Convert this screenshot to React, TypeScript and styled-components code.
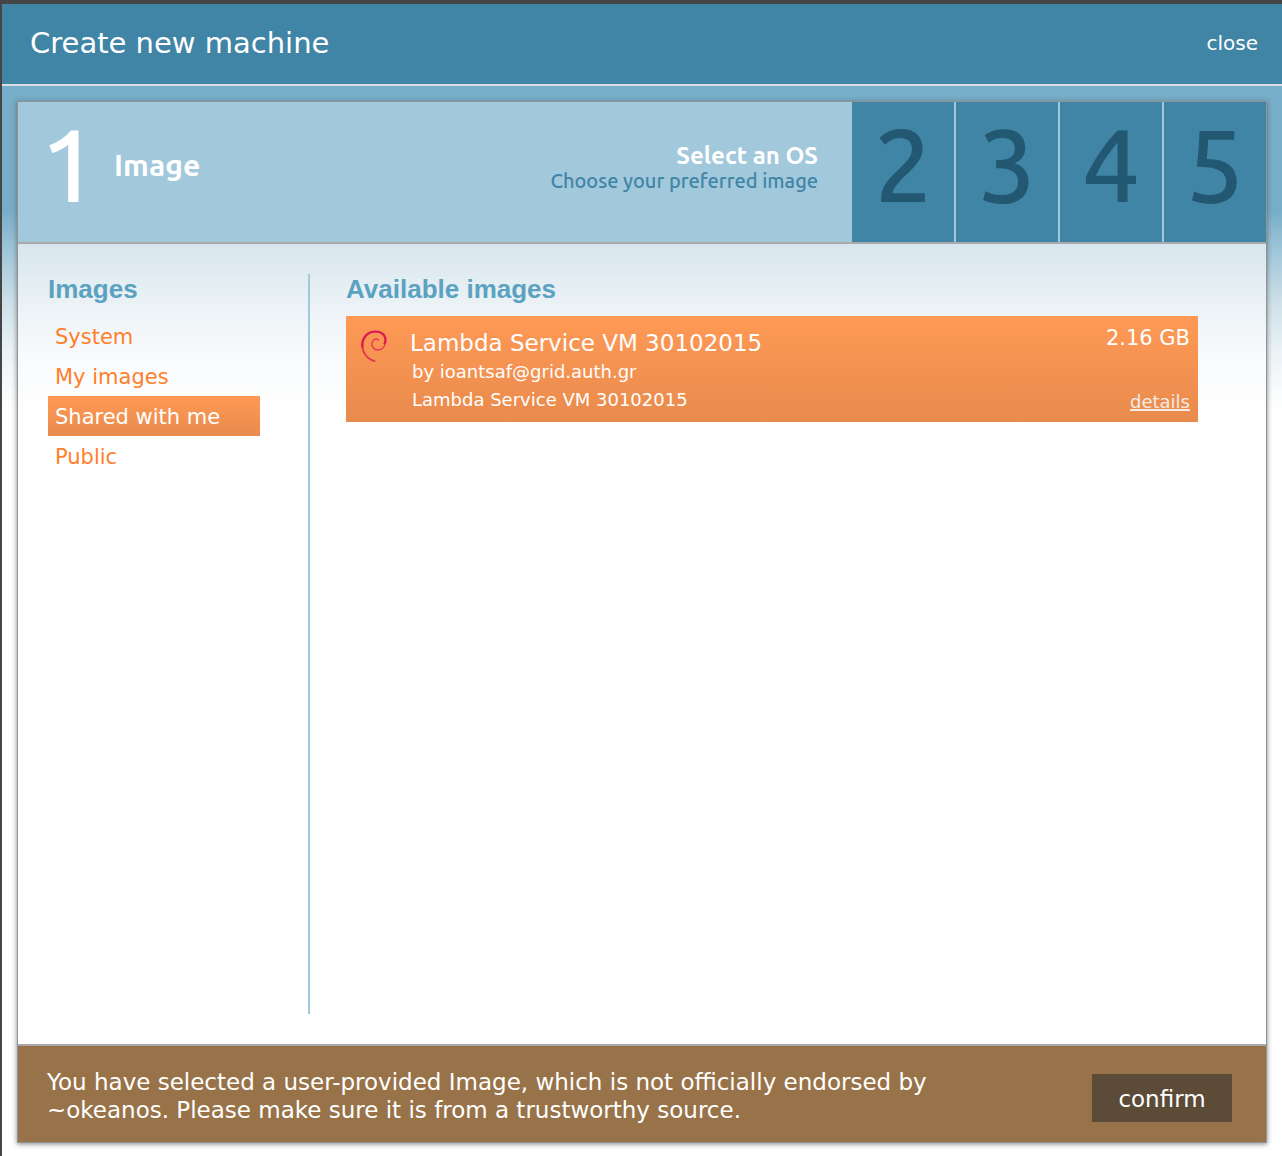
import React, { useState } from "react";
import styled, { createGlobalStyle } from "styled-components";

const sans = '"DejaVu Sans", Verdana, sans-serif';
const display = 'Ubuntu, "Noto Sans", sans-serif';
const heading = '"Liberation Sans", Arial, sans-serif';

const GlobalStyle = createGlobalStyle`
  * { box-sizing: border-box; }
  body { margin: 0; background: #fff; font-family: ${sans}; }
  h1, h2, h3, p, ul { margin: 0; padding: 0; }
  ul { list-style: none; }
  button { border: 0; margin: 0; padding: 0; font: inherit; cursor: pointer; }
`;

const Page = styled.div`
  display: flex;
  flex-direction: column;
  min-height: 100vh;
  border-top: 4px solid #464546;
  border-left: 2px solid #464546;
`;

const Header = styled.header`
  display: flex;
  align-items: center;
  justify-content: space-between;
  height: 82px;
  padding: 0 24px 2px 28px;
  color: #fff;
  background: #4085a6;
  border-bottom: 2px solid #dadde3;
`;

const Title = styled.h1`
  font-size: 29px;
  font-weight: 400;
`;

const CloseButton = styled.button`
  color: #fff;
  background: none;
  font-size: 20px;
`;

const Backdrop = styled.div`
  display: flex;
  flex: 1;
  padding: 16px 16px 14px;
  background: linear-gradient(
    #76adc8 0,
    #76adc8 124px,
    #9fc5d9 164px,
    #cfe1e9 218px,
    #eaf2f6 264px,
    #ffffff 324px
  );
`;

const Wizard = styled.main`
  display: flex;
  flex: 1;
  flex-direction: column;
  background: #fff;
  box-shadow: 0 0 0 1px #8f9496, 0 1px 5px 1px rgba(90, 90, 90, 0.75);
`;

const Steps = styled.div`
  display: flex;
  height: 142px;
  background: #a2c8db;
  border-bottom: 2px solid #a9a9ab;
`;

const CurrentStep = styled.section`
  display: flex;
  flex: 1;
  align-items: center;
  padding: 0 32px 0 22px;
  color: #fff;
  font-family: ${display};
`;

const StepNumber = styled.span`
  display: block;
  padding-bottom: 16px;
  font-family: ${display};
  font-size: 103px;
  font-weight: 500;
  line-height: 124px;
`;

const StepName = styled.h2`
  flex: 1;
  padding: 0 0 14px 16px;
  font-size: 30px;
  font-weight: 600;
`;

const StepHint = styled.div`
  padding-bottom: 8px;
  text-align: right;
`;

const HintTitle = styled.h3`
  font-size: 24px;
  font-weight: 600;
  line-height: 26px;
`;

const HintText = styled.p`
  color: #4085a6;
  font-size: 20px;
  font-weight: 500;
  line-height: 24px;
`;

const StepButton = styled.button`
  width: 104px;
  color: #225872;
  background: #4085a6;
  border-left: 2px solid #a2c8db;
`;

const Content = styled.div`
  display: flex;
  flex: 1;
  padding: 30px 68px 30px 30px;
  background: linear-gradient(
    #d7e6ed 0,
    #ebf2f6 60px,
    #f8fafc 110px,
    #ffffff 170px
  );
`;

const Sidebar = styled.nav`
  width: 262px;
  padding-right: 48px;
  border-right: 2px solid #a2c8db;
`;

const SectionTitle = styled.h2`
  height: 42px;
  color: #5ba2c1;
  font-family: ${heading};
  font-size: 26px;
  line-height: 30px;
`;

const CategoryButton = styled.button<{ $active: boolean }>`
  display: block;
  width: 100%;
  height: 40px;
  padding: 2px 0 0 7px;
  color: ${(p) => (p.$active ? "#fff" : "#ff7f2a")};
  background: ${(p) =>
    p.$active ? "linear-gradient(#ff9955, #e88b4d)" : "none"};
  font-size: 21px;
  text-align: left;
`;

const Available = styled.section`
  flex: 1;
  padding-left: 36px;
`;

const ImageCard = styled.li`
  display: flex;
  height: 106px;
  padding: 8px 8px 6px 12px;
  color: #fff;
  background: linear-gradient(#ff9955, #e88b4d);
`;

const CardIcon = styled.div`
  width: 52px;
  padding-top: 6px;
`;

const CardText = styled.div`
  flex: 1;
  padding-top: 4px;
`;

const CardTitle = styled.h3`
  font-size: 23px;
  font-weight: 400;
  line-height: 30px;
`;

const CardLine = styled.p`
  padding-left: 2px;
  font-size: 18px;
  line-height: 28px;
`;

const CardAside = styled.div`
  display: flex;
  flex-direction: column;
  align-items: flex-end;
  justify-content: space-between;
  line-height: 28px;
`;

const Size = styled.span`
  font-size: 21px;
`;

const DetailsLink = styled.a`
  color: #f4ebe4;
  font-size: 18px;
  text-decoration-thickness: 2px;
`;

const Footer = styled.footer`
  display: flex;
  align-items: center;
  justify-content: space-between;
  min-height: 98px;
  padding: 8px 34px 0 29px;
  color: #fff;
  background: #987349;
  border-top: 2px solid #a9a9ab;
`;

const Notice = styled.p`
  max-width: 940px;
  padding-bottom: 4px;
  font-size: 23px;
  line-height: 28px;
`;

const ConfirmButton = styled.button`
  width: 140px;
  height: 48px;
  padding-top: 2px;
  color: #fff;
  background: #5c4c37;
  font-size: 23px;
`;

const categories = ["System", "My images", "Shared with me", "Public"];

function DebianSwirl() {
  return (
    <svg
      width="32"
      height="32"
      viewBox="0 0 96 96"
      fill="none"
      stroke="#dc1a50"
      strokeLinecap="round"
      aria-hidden="true"
    >
      <path
        d="M50 94 C28 86 13 68 13 44"
        strokeWidth="5"
        strokeOpacity="0.8"
      />
      <path
        d="M13 50 C11 24 28 6 50 5 C68 4 79 13 82 25 C83 31 82 36 80 40"
        strokeWidth="7"
      />
      <path
        d="M82 34 C81 50 73 60 60 60 C47 60 40 49 42 39 C44 29 54 23 62 30"
        strokeWidth="4"
        strokeOpacity="0.75"
      />
    </svg>
  );
}

export default function App() {
  const [category, setCategory] = useState("Shared with me");

  return (
    <>
      <GlobalStyle />
      <Page>
        <Header>
          <Title>Create new machine</Title>
          <CloseButton type="button">close</CloseButton>
        </Header>
        <Backdrop>
          <Wizard>
            <Steps>
              <CurrentStep>
                <StepNumber>1</StepNumber>
                <StepName>Image</StepName>
                <StepHint>
                  <HintTitle>Select an OS</HintTitle>
                  <HintText>Choose your preferred image</HintText>
                </StepHint>
              </CurrentStep>
              {[2, 3, 4, 5].map((n) => (
                <StepButton key={n} type="button">
                  <StepNumber>{n}</StepNumber>
                </StepButton>
              ))}
            </Steps>
            <Content>
              <Sidebar>
                <SectionTitle>Images</SectionTitle>
                {categories.map((name) => (
                  <CategoryButton
                    key={name}
                    type="button"
                    $active={name === category}
                    onClick={() => setCategory(name)}
                  >
                    {name}
                  </CategoryButton>
                ))}
              </Sidebar>
              <Available>
                <SectionTitle>Available images</SectionTitle>
                <ul>
                  <ImageCard>
                    <CardIcon>
                      <DebianSwirl />
                    </CardIcon>
                    <CardText>
                      <CardTitle>Lambda Service VM 30102015</CardTitle>
                      <CardLine>by ioantsaf@grid.auth.gr</CardLine>
                      <CardLine>Lambda Service VM 30102015</CardLine>
                    </CardText>
                    <CardAside>
                      <Size>2.16 GB</Size>
                      <DetailsLink href="#details">details</DetailsLink>
                    </CardAside>
                  </ImageCard>
                </ul>
              </Available>
            </Content>
            <Footer>
              <Notice>
                You have selected a user-provided Image, which is not officially
                endorsed by ~okeanos. Please make sure it is from a trustworthy
                source.
              </Notice>
              <ConfirmButton type="button">confirm</ConfirmButton>
            </Footer>
          </Wizard>
        </Backdrop>
      </Page>
    </>
  );
}
